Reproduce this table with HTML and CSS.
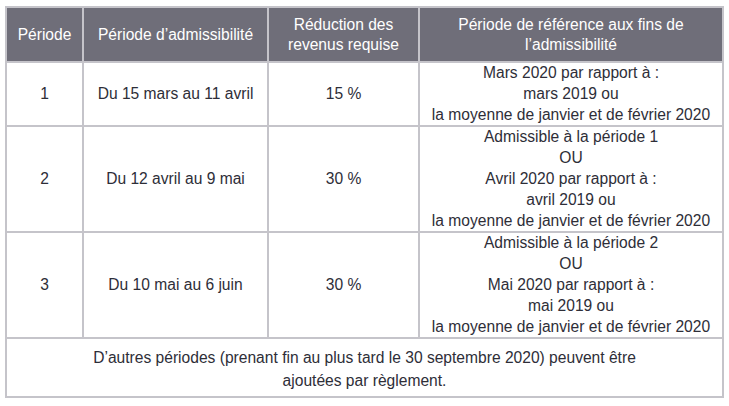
FILE: index.html
```html
<!DOCTYPE html>
<html lang="fr">
<head>
<meta charset="utf-8">
<link rel="stylesheet" href="styles.css">
</head>
<body>
<table class="grid">
  <colgroup>
    <col class="c1"><col class="c2"><col class="c3"><col class="c4">
  </colgroup>
  <thead>
    <tr>
      <th>Période</th>
      <th>Période d’admissibilité</th>
      <th>Réduction des<br>revenus requise</th>
      <th>Période de référence aux fins de<br>l’admissibilité</th>
    </tr>
  </thead>
  <tbody>
    <tr class="r1">
      <td>1</td>
      <td>Du 15 mars au 11 avril</td>
      <td>15 %</td>
      <td>Mars 2020 par rapport à :<br>mars 2019 ou<br>la moyenne de janvier et de février 2020</td>
    </tr>
    <tr class="r2">
      <td>2</td>
      <td>Du 12 avril au 9 mai</td>
      <td>30 %</td>
      <td>Admissible à la période 1<br>OU<br>Avril 2020 par rapport à :<br>avril 2019 ou<br>la moyenne de janvier et de février 2020</td>
    </tr>
    <tr class="r3">
      <td>3</td>
      <td>Du 10 mai au 6 juin</td>
      <td>30 %</td>
      <td>Admissible à la période 2<br>OU<br>Mai 2020 par rapport à :<br>mai 2019 ou<br>la moyenne de janvier et de février 2020</td>
    </tr>
    <tr class="foot">
      <td colspan="4">D’autres périodes (prenant fin au plus tard le 30 septembre 2020) peuvent être<br>ajoutées par règlement.</td>
    </tr>
  </tbody>
</table>
</body>
</html>
```
FILE: styles.css
```css
html, body {
  background: #ffffff;
}
body {
  margin: 6px 0 0 5px;
  font-family: "Liberation Sans", Arial, sans-serif;
  font-size: 15.6px;
  color: #2e2e38;
}
.grid {
  border-collapse: collapse;
  border: 2px solid #c5c4ca;
  width: 717px;
  table-layout: fixed;
}
.c1 { width: 77px; }
.c2 { width: 185px; }
.c3 { width: 151px; }
.c4 { width: 304px; }
.grid th, .grid td {
  border: 2px solid #c5c4ca;
  text-align: center;
  vertical-align: middle;
  padding: 0;
}
.grid th {
  background: #6f6e79;
  color: #ffffff;
  font-weight: normal;
  line-height: 20px;
  height: 53px;
}
.grid td {
  line-height: 20.8px;
}
.r1 td { height: 61px; }
.r2 td, .r3 td { height: 104px; }
.foot td {
  line-height: 23px;
  height: 54px;
  padding-top: 3px;
}
```
